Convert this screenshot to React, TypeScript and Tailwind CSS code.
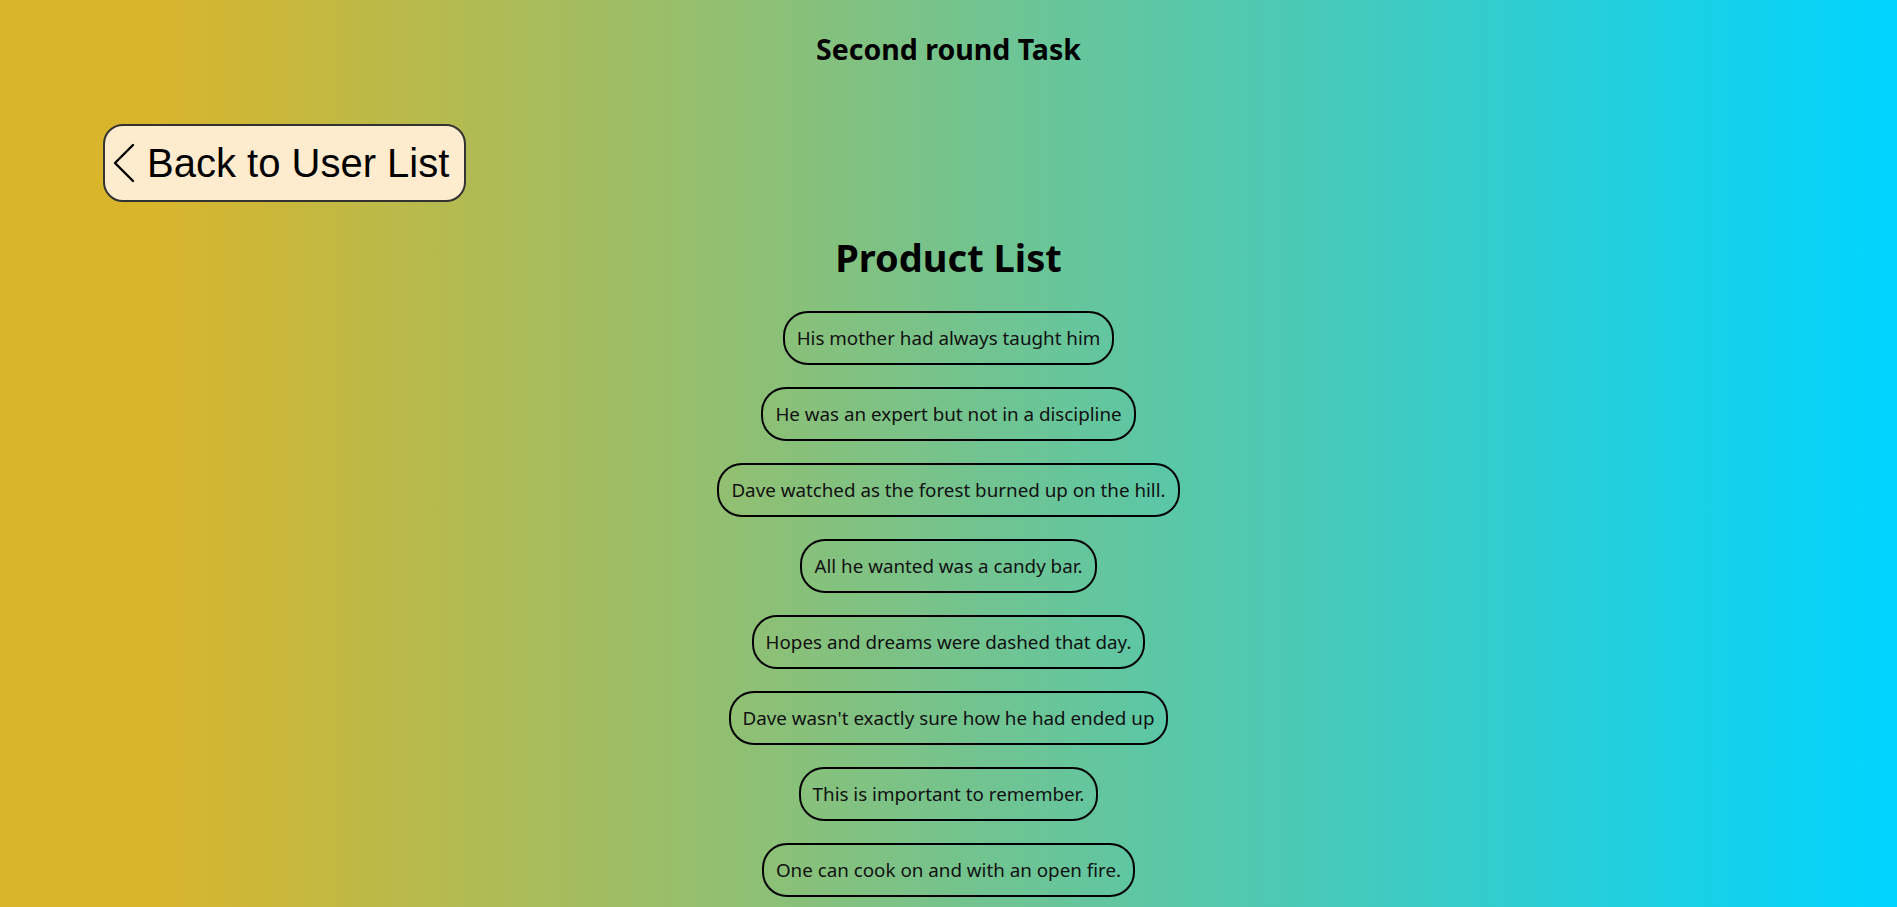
import React from "react";

const items = [
  "His mother had always taught him",
  "He was an expert but not in a discipline",
  "Dave watched as the forest burned up on the hill.",
  "All he wanted was a candy bar.",
  "Hopes and dreams were dashed that day.",
  "Dave wasn't exactly sure how he had ended up",
  "This is important to remember.",
  "One can cook on and with an open fire.",
];

export default function App() {
  return (
    <div
      className="min-h-screen w-full bg-[linear-gradient(90deg,#d9b52c_8%,#00d4ff_100%)] text-black"
      style={{ fontFamily: '"Noto Sans", "Open Sans", sans-serif' }}
    >
      <div className="pt-[32px] text-center text-[28.5px] font-bold leading-[34px]">
        Second round Task
      </div>
      <div className="mt-[58px] pl-[103px]">
        <button
          className="inline-flex h-[78px] items-center rounded-[20px] border-2 border-[#333] bg-[#ffebcd] pl-[7px] pr-[15px] text-[40px] leading-none text-black"
          style={{ fontFamily: '"Liberation Sans", Arial, sans-serif' }}
        >
          <svg width="24" height="40" viewBox="0 0 24 40" fill="none" className="mr-[11px]">
            <polyline points="21,2 3,20 21,38" stroke="#000" strokeWidth="2.4" strokeLinecap="round" strokeLinejoin="round" />
          </svg>
          <span>Back to User List</span>
        </button>
      </div>
      <h1 className="mt-[31px] text-center text-[38px] font-bold leading-[48px]">Product List</h1>
      <div className="mt-[30px] flex flex-col items-center gap-[22px] pb-10">
        {items.map((t) => (
          <div
            key={t}
            className="flex h-[54px] items-center rounded-[25px] border-2 border-black px-[12px] text-[18.8px] text-[#111]"
          >
            {t}
          </div>
        ))}
      </div>
    </div>
  );
}
